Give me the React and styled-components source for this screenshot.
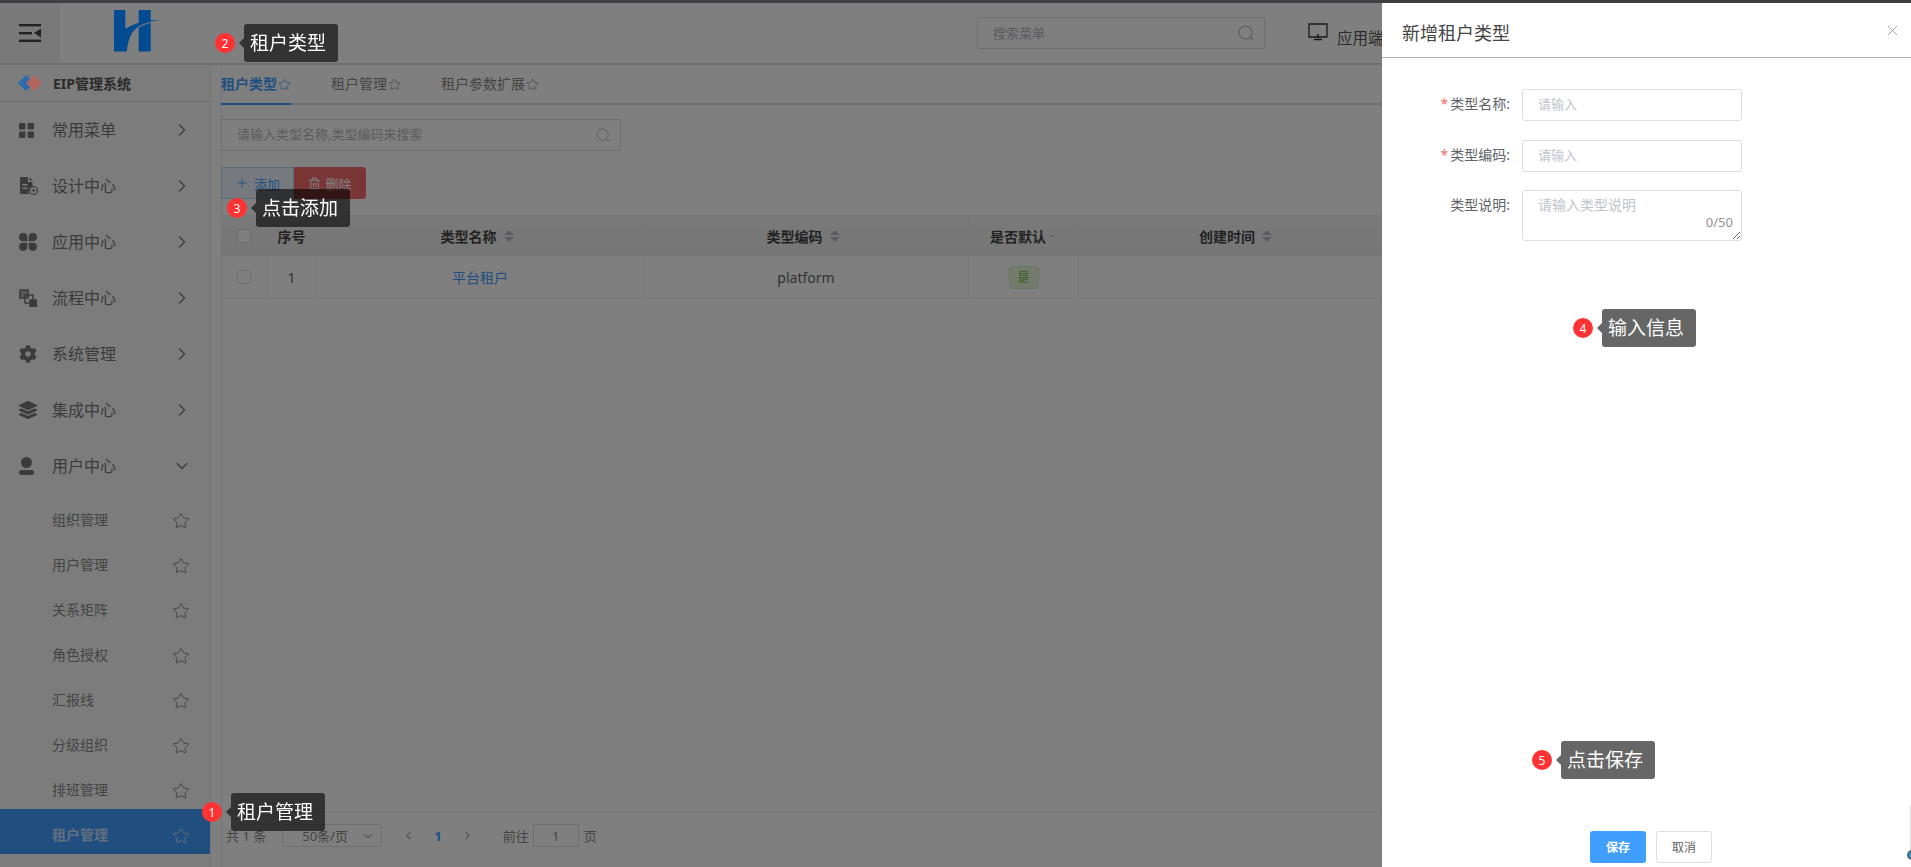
import React from 'react';
import styled, { createGlobalStyle } from 'styled-components';
import { ChevronRight, ChevronDown, ChevronLeft, Star, Plus, Trash2, X } from 'lucide-react';
import { FaCog, FaLayerGroup } from 'react-icons/fa';

const Global = createGlobalStyle`
  html, body { margin: 0; padding: 0; height: 867px; overflow: hidden; background: #fff; }
  body { font-family: "Noto Sans", "Noto Sans CJK SC", sans-serif; font-size: 14px; color: #666; }
  * { box-sizing: border-box; }
  input::placeholder, textarea::placeholder { color: #c0c4cc; opacity: 1; }
`;

const Page = styled.div`
  position: relative; width: 1911px; height: 867px; overflow: hidden;
  display: flex; flex-direction: column; background: #fff;
`;
const TopStrip = styled.div`height: 3px; flex: none; background: #7c7e8e;`;
const Header = styled.header`
  height: 62px; flex: none; display: flex; align-items: stretch;
  background: #fff; border-bottom: 2px solid #dedfe6;
`;
const Toggle = styled.div`
  width: 60px; flex: none; background: #f2f2f2; display: flex; align-items: center; justify-content: center;
`;
const LogoWrap = styled.div`
  position: relative; z-index: 2; width: 60px; margin-left: 54px; padding-top: 7px; height: 50px;
`;
const TopSearch = styled.div`
  margin-left: auto; margin-top: 14px; width: 288px; height: 32px;
  border: 1px solid #dcdfe6; border-radius: 2px; display: flex; align-items: center;
  justify-content: space-between; padding: 0 10px 0 15px; color: #b4b6bc; font-size: 13px;
`;
const Placeholder = styled.span`margin-bottom: ${p => p.$up || 2}px;`;
const HeaderRight = styled.div`
  width: 646px; flex: none; padding: 20px 0 0 43px; display: flex; gap: 9px; align-items: flex-start;
  font-size: 15.5px; color: #555;
`;
const HeaderLabel = styled.span`line-height: 30px;`;

const Body = styled.div`flex: 1; min-height: 0; display: flex;`;
const Sidebar = styled.aside`
  width: 211px; flex: none; background: #f8f8f8; border-right: 1px solid #e8e8e8;
`;
const Brand = styled.div`
  height: 37px; display: flex; align-items: center; gap: 11px; padding-left: 18px;
  border-bottom: 1px solid #ddd; font-size: 14px; font-weight: 700; color: #555;
`;
const BrandMark = styled.span`position: relative; z-index: 2; display: flex;`;
const MenuItem = styled.div`
  height: 56px; display: flex; align-items: center; padding-left: 19px; font-size: 16px; color: #777;
`;
const MenuIcon = styled.span`
  width: 33px; flex: none; display: flex; align-items: center; color: #777;
`;
const MenuText = styled.span`flex: 1; margin-bottom: 2px;`;
const MenuChevron = styled.span`display: flex; margin-right: 18px; color: #777;`;
const SubItem = styled.div`
  height: 45px; padding: 8px 20px 0 52px; display: flex; align-items: center; justify-content: space-between;
  font-size: 14px; font-weight: ${p => (p.$active ? 700 : 400)};
  color: ${p => (p.$active ? '#c0dcff' : '#888')};
  background: ${p => (p.$active ? '#409eff' : 'transparent')};
`;
const SubLabel = styled.span`margin-bottom: 4px;`;
const Strip = styled.div`width: 10px; flex: none; background: #fff;`;
const Content = styled.main`
  flex: 1; min-width: 0; display: flex; flex-direction: column;
  box-shadow: inset 1px 0 0 #e4e7ed;
`;
const Tabs = styled.nav`
  height: 40px; flex: none; display: flex; gap: 40px; border-bottom: 2px solid #e0e0e8;
`;
const Tab = styled.div`
  height: 40px; display: flex; align-items: center; gap: 1px; font-size: 14px; line-height: 1;
  color: ${p => (p.$active ? '#409eff' : '#888')};
  font-weight: ${p => (p.$active ? 700 : 400)};
  border-bottom: 2px solid ${p => (p.$active ? '#409eff' : 'transparent')};
`;
const Main = styled.div`flex: 1; min-height: 0; padding-top: 14px;`;
const SearchBox = styled.div`
  width: 400px; height: 32px; border: 1px solid #dcdfe6; display: flex; align-items: center;
  justify-content: space-between; padding: 0 10px 0 15px; font-size: 13px; color: #b8b8bc;
`;
const Toolbar = styled.div`display: flex; margin-top: 16px; height: 32px;`;
const AddButton = styled.div`
  width: 73px; display: flex; align-items: center; justify-content: center; gap: 5px;
  background: #ecf5ff; border: 1px solid #b3d8ff; border-radius: 3px 0 0 3px; color: #409eff; font-size: 13px;
`;
const DeleteButton = styled.div`
  width: 72px; display: flex; align-items: center; justify-content: center; gap: 4px;
  background: #f56c6c; border-radius: 0 3px 3px 0; color: #fff; font-size: 13px;
`;
const Table = styled.div`margin-top: 16px;`;
const Row = styled.div`
  display: grid; grid-template-columns: 46px 50px 327px 325px 110px 320px 1fr;
  height: ${p => p.$h}px; border-bottom: 1px solid #ebeef5;
  ${p => p.$head && 'background: linear-gradient(#f4f4f4, #ececec); border-top: 1px solid #ebeef5; font-weight: 700; color: #444;'}
`;
const Cell = styled.div`
  display: flex; align-items: center; justify-content: center; gap: 7px;
  border-right: 1px solid #ebeef5; font-size: 14px;
  color: ${p => (p.$link ? '#409eff' : 'inherit')};
`;
const SortCell = styled(Cell)`padding-right: 6px;`;
const FilterCell = styled(Cell)`gap: 1px;`;
const Check = styled.span`
  width: 14px; height: 14px; border: 1px solid #dcdfe6; border-radius: 2px; background: #fff;
`;
const Caret = styled.span`
  display: flex; flex-direction: column; gap: 2px;
  &::before, &::after { content: ''; border-left: 5px solid transparent; border-right: 5px solid transparent; }
  &::before { border-bottom: 5px solid #b4b6bc; }
  &::after { border-top: 5px solid #b4b6bc; }
`;
const Tag = styled.span`
  width: 30px; height: 23px; display: flex; align-items: center; justify-content: center;
  background: #e7f6dd; border: 1px solid #d3eec0; border-radius: 3px; color: #67c23a; font-size: 12px;
`;
const Footer = styled.footer`
  height: 56px; flex: none; border-top: 1px solid #ebeef5; display: flex; align-items: center;
  padding: 0 0 8px 5px; font-size: 13px; color: #888;
`;
const PageSelect = styled.div`
  width: 100px; height: 23px; margin-left: 16px; border: 1px solid #dcdfe6; border-radius: 3px;
  display: flex; align-items: center; justify-content: space-between; padding: 0 6px 0 19px;
`;
const Pager = styled.div`display: flex; align-items: center; gap: 19px; margin-left: 20px; color: #aaa; font-weight: 700;`;
const PagerNum = styled.span`color: #409eff; font-size: 13px;`;
const Jump = styled.span`margin-left: 29px;`;
const JumpBox = styled.span`
  width: 46px; height: 23px; margin: 0 5px 0 4px; border: 1px solid #dcdfe6;
  display: flex; align-items: center; justify-content: center;
`;

const Overlay = styled.div`position: fixed; inset: 0; z-index: 1; background: rgba(0, 0, 0, .5);`;

const Drawer = styled.section`
  position: absolute; z-index: 3; top: 3px; right: 0; bottom: 0; width: 529px; background: #fff;
  display: flex; flex-direction: column;
`;
const DrawerHead = styled.div`
  height: 55px; flex: none; border-bottom: 1px solid #b0b0b0; display: flex; align-items: center;
  justify-content: space-between; padding: 0 10px 0 20px; font-size: 18px; color: #444;
`;
const DrawerTitle = styled.span`margin-top: 4px;`;
const CloseBtn = styled.span`display: flex; color: #999;`;
const Form = styled.div`flex: 1; padding-top: 31px;`;
const FormRow = styled.div`display: flex; align-items: flex-start; margin-bottom: ${p => p.$mb}px;`;
const FormLabel = styled.label`
  width: 128px; flex: none; text-align: right; line-height: 30px; font-size: 14px; color: #606266;
  &::before { content: ${p => (p.$req ? "'*'" : "''")}; color: #f56c6c; margin-right: 2px; }
`;
const Field = styled.div`position: relative; width: 220px; margin-left: 12px;`;
const Input = styled.input`
  display: block; width: 100%; height: 32px; border: 1px solid #dcdfe6; border-radius: 3px; outline: 0;
  padding: 0 15px 2px; font: 13px "Noto Sans", "Noto Sans CJK SC", sans-serif;
`;
const TextArea = styled.textarea`
  display: block; width: 100%; height: 51px; border: 1px solid #dcdfe6; border-radius: 3px; outline: 0;
  padding: 4px 15px; font: 14px/1.4 "Noto Sans", "Noto Sans CJK SC", sans-serif;
`;
const Counter = styled.span`position: absolute; right: 9px; top: 23px; font-size: 13px; color: #909399;`;
const DrawerFoot = styled.div`flex: none; display: flex; gap: 10px; padding: 0 0 4px 208px;`;
const FootBtn = styled.div`
  width: 56px; height: 32px; display: flex; align-items: center; justify-content: center; font-size: 12px;
  border-radius: 3px;
  ${p => (p.$primary
    ? 'background: #409eff; color: #fff; font-weight: 700;'
    : 'background: #fff; color: #606266; border: 1px solid #dcdfe6;')}
`;
const EdgeLine = styled.div`
  position: absolute; z-index: 4; right: 0; top: 805px; width: 1px; height: 45px; background: #ddd;
`;
const EdgeDot = styled.div`
  position: absolute; z-index: 4; left: 1907px; top: 850px; width: 10px; height: 10px; border-radius: 50%;
  background: #2aa3d8; border: 2px solid #55626c;
`;

const Tip = styled.div`
  position: absolute; z-index: 5; left: ${p => p.$x}px; top: ${p => p.$y}px;
  display: flex; align-items: center;
`;
const Badge = styled.span`
  width: 20px; height: 20px; border-radius: 50%; background: #ff3333; color: #fff; font-size: 12px;
  display: flex; align-items: center; justify-content: center; margin-right: 9px;
`;
const TipBody = styled.div`
  position: relative; width: 94px; height: 38px; border-radius: 3px; background: rgba(0, 0, 0, .6);
  color: #fff; font-size: 19px; line-height: 38px; padding-left: 6px;
  &::before {
    content: ''; position: absolute; left: -5px; top: 14px; border-top: 5px solid transparent;
    border-bottom: 5px solid transparent; border-right: 5px solid rgba(0, 0, 0, .6);
  }
`;

const SearchGlyph = ({ size = 16 }) => (
  <svg width={size} height={size} viewBox="0 0 16 16" fill="none" stroke="currentColor" strokeWidth="1.1">
    <circle cx="7.5" cy="7.5" r="6.5" /><path d="M12.500 12.500l2.500 2.500" />
  </svg>
);
const ToggleIcon = () => (
  <svg width="22" height="18" viewBox="0 0 22 18" fill="#444">
    <rect width="22" height="2.4" /><rect y="8" width="13" height="2.4" /><rect y="15.6" width="22" height="2.4" />
    <path d="M15 9l7-4.500v9z" />
  </svg>
);
const Logo = () => (
  <svg width="48" height="43" viewBox="114 10 48 43" fill="#004b91">
    <path d="M114 10H125.300V28.700C131 25.500 135 24 138.700 22.700V10H150.700V20.500C154 20 157.500 19.800 161 19.800C149 21.500 138 24.500 132 33C129 38 127.500 45 126.700 51.500H114Z" />
    <path d="M138.700 28C142 25.500 147 23.800 150.700 22.800V51.500H138.700Z" />
  </svg>
);
const BrandIcon = () => (
  <svg width="24" height="18" viewBox="0 0 24 18">
    <path d="M8 1l8 8-8 8-8-8z" fill="#2d6ab0" /><path d="M16 1l8 8-8 8-8-8z" fill="#b0665c" />
  </svg>
);
const GridIcon = () => (
  <svg width="15" height="15" viewBox="0 0 15 15" fill="currentColor">
    <rect width="6.4" height="6.4" rx="1" /><rect x="8.6" width="6.4" height="6.4" rx="1" />
    <rect y="8.6" width="6.4" height="6.4" rx="1" /><rect x="8.6" y="8.6" width="6.4" height="6.4" rx="1" />
  </svg>
);
const FileIcon = () => (
  <svg width="19" height="18" viewBox="0 0 19 18" fill="currentColor">
    <path d="M1 1.500C1 .7 1.700 0 2.500 0H9v5h4.500v4.600a5 5 0 0 0-3.300 7.400H2.500C1.700 17 1 16.300 1 15.500z" />
    <path d="M10.500 0l3 3.500h-3z" />
    <rect x="3.500" y="7" width="5" height="1.500" fill="#f8f8f8" /><rect x="3.500" y="10.500" width="5" height="1.500" fill="#f8f8f8" />
    <circle cx="14.500" cy="13.500" r="4" fill="none" stroke="currentColor" strokeWidth="1.200" />
    <path d="M12.500 13h4v1h-4zM14 11.500h1v4h-1z" />
  </svg>
);
const CloverIcon = () => (
  <svg width="18" height="18" viewBox="0 0 18 18" fill="currentColor">
    <path d="M8.300 8.300V4.200a4.100 4.100 0 1 0-4.100 4.100z" /><path d="M9.700 8.300V4.200a4.100 4.100 0 1 1 4.100 4.100z" />
    <path d="M8.300 9.700v4.100a4.100 4.100 0 1 1-4.100-4.100z" /><path d="M9.700 9.700v4.100a4.100 4.100 0 1 0 4.100-4.100z" />
  </svg>
);
const FlowIcon = () => (
  <svg width="18" height="18" viewBox="0 0 18 18" fill="none" stroke="currentColor" strokeWidth="1.600">
    <path d="M1 1h8v8H1z" fill="currentColor" fillOpacity=".55" /><path d="M6 6h8v8H6z" />
    <path d="M11 11h6.200v6.200H11z" fill="currentColor" />
  </svg>
);
const UserIcon = () => (
  <svg width="15" height="18" viewBox="0 0 15 18" fill="currentColor">
    <circle cx="7.500" cy="5.500" r="5.500" /><rect y="13" width="15" height="5" rx="2.500" />
  </svg>
);
const MonitorIcon = () => (
  <svg width="20" height="18" viewBox="0 0 20 18" fill="none" stroke="#333" strokeWidth="1.300">
    <path d="M1 1h18v13H1z" /><path d="M10 11v4M6 16.500h8" strokeWidth="1.500" />
  </svg>
);

const topMenu = [
  ['常用菜单', <GridIcon />], ['设计中心', <FileIcon />], ['应用中心', <CloverIcon />], ['流程中心', <FlowIcon />],
  ['系统管理', <FaCog size={18} />], ['集成中心', <FaLayerGroup size={18} />],
];
const subMenu = ['组织管理', '用户管理', '关系矩阵', '角色授权', '汇报线', '分级组织', '排班管理', '租户管理'];
const tips = [
  { n: 1, text: '租户管理', x: 202, y: 793 },
  { n: 2, text: '租户类型', x: 215, y: 24 },
  { n: 3, text: '点击添加', x: 227, y: 189 },
  { n: 4, text: '输入信息', x: 1573, y: 309 },
  { n: 5, text: '点击保存', x: 1532, y: 741 },
];

export default function App() {
  return (
    <Page>
      <Global />
      <TopStrip />
      <Header>
        <Toggle><ToggleIcon /></Toggle>
        <LogoWrap><Logo /></LogoWrap>
        <TopSearch><Placeholder>搜索菜单</Placeholder><SearchGlyph /></TopSearch>
        <HeaderRight><MonitorIcon /><HeaderLabel>应用端</HeaderLabel></HeaderRight>
      </Header>
      <Body>
        <Sidebar>
          <Brand><BrandMark><BrandIcon /></BrandMark>EIP管理系统</Brand>
          {topMenu.map(([t, icon]) => (
            <MenuItem key={t}>
              <MenuIcon>{icon}</MenuIcon><MenuText>{t}</MenuText>
              <MenuChevron><ChevronRight size={20} strokeWidth={1.500} /></MenuChevron>
            </MenuItem>
          ))}
          <MenuItem>
            <MenuIcon><UserIcon /></MenuIcon><MenuText>用户中心</MenuText>
            <MenuChevron><ChevronDown size={20} strokeWidth={1.500} /></MenuChevron>
          </MenuItem>
          {subMenu.map((t, i) => (
            <SubItem key={t} $active={i === subMenu.length - 1}>
              <SubLabel>{t}</SubLabel><Star size={18} strokeWidth={1.300} />
            </SubItem>
          ))}
        </Sidebar>
        <Strip />
        <Content>
          <Tabs>
            <Tab $active>租户类型<Star size={13} strokeWidth={1.300} /></Tab>
            <Tab>租户管理<Star size={13} strokeWidth={1.300} /></Tab>
            <Tab>租户参数扩展<Star size={13} strokeWidth={1.300} /></Tab>
          </Tabs>
          <Main>
            <SearchBox><Placeholder $up={3}>请输入类型名称,类型编码来搜索</Placeholder><SearchGlyph size={14} /></SearchBox>
            <Toolbar>
              <AddButton><Plus size={14} strokeWidth={1.500} />添加</AddButton>
              <DeleteButton><Trash2 size={13} />删除</DeleteButton>
            </Toolbar>
            <Table>
              <Row $head $h={41}>
                <Cell><Check /></Cell>
                <Cell>序号</Cell>
                <SortCell>类型名称<Caret /></SortCell>
                <SortCell>类型编码<Caret /></SortCell>
                <FilterCell>是否默认<ChevronDown size={10} strokeWidth={1.500} color="#888" /></FilterCell>
                <SortCell>创建时间<Caret /></SortCell>
                <Cell />
              </Row>
              <Row $h={43}>
                <Cell><Check /></Cell>
                <Cell>1</Cell>
                <Cell $link>平台租户</Cell>
                <Cell>platform</Cell>
                <Cell><Tag>是</Tag></Cell>
                <Cell />
                <Cell />
              </Row>
            </Table>
          </Main>
          <Footer>
            共 1 条
            <PageSelect>50条/页<ChevronDown size={14} color="#bbb" /></PageSelect>
            <Pager>
              <ChevronLeft size={13} /><PagerNum>1</PagerNum><ChevronRight size={13} />
            </Pager>
            <Jump>前往</Jump><JumpBox>1</JumpBox>页
          </Footer>
        </Content>
      </Body>
      <Overlay />
      <Drawer>
        <DrawerHead><DrawerTitle>新增租户类型</DrawerTitle><CloseBtn><X size={17} strokeWidth={1.200} /></CloseBtn></DrawerHead>
        <Form>
          <FormRow $mb={19}>
            <FormLabel $req>类型名称:</FormLabel>
            <Field><Input placeholder="请输入" /></Field>
          </FormRow>
          <FormRow $mb={18}>
            <FormLabel $req>类型编码:</FormLabel>
            <Field><Input placeholder="请输入" /></Field>
          </FormRow>
          <FormRow $mb={0}>
            <FormLabel>类型说明:</FormLabel>
            <Field><TextArea placeholder="请输入类型说明" /><Counter>0/50</Counter></Field>
          </FormRow>
        </Form>
        <DrawerFoot>
          <FootBtn $primary>保存</FootBtn>
          <FootBtn>取消</FootBtn>
        </DrawerFoot>
      </Drawer>
      <EdgeLine /><EdgeDot />
      {tips.map(t => (
        <Tip key={t.n} $x={t.x} $y={t.y}>
          <Badge>{t.n}</Badge><TipBody>{t.text}</TipBody>
        </Tip>
      ))}
    </Page>
  );
}
